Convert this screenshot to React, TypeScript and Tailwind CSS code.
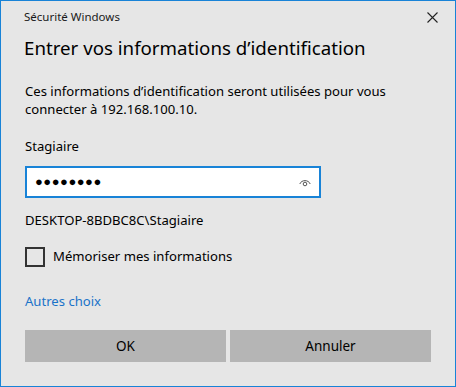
const EyeIcon = () => (
  <svg width="12" height="9" viewBox="0 0 12 9" fill="none" stroke="#555" strokeWidth="1">
    <path d="M0.8 6 C2.5 1.5 9.5 1.5 11.2 6" />
    <circle cx="6" cy="6" r="1.8" />
  </svg>
);

const CloseIcon = () => (
  <svg width="11" height="11" viewBox="0 0 11 11" stroke="#222" strokeWidth="1.1">
    <path d="M0.5 0.5 L10.5 10.5 M10.5 0.5 L0.5 10.5" />
  </svg>
);

export default function App() {
  return (
    <div
      className="w-[456px] h-[387px] bg-[#e6e6e6] border border-[#1883d7] flex flex-col text-[#1a1a1a]"
      style={{ fontFamily: '"Noto Sans", "Open Sans", sans-serif' }}
    >
      <div className="h-[32px] flex items-center justify-between pl-[23px] pr-[17px]">
        <span className="text-[11.5px] text-[#1a1a1a]">Sécurité Windows</span>
        <CloseIcon />
      </div>

      <div className="h-[30px] flex items-center pl-[23px]">
        <h1 className="text-[18.7px] text-black">Entrer vos informations d’identification</h1>
      </div>

      <p className="mt-[19px] px-[24px] text-[13.1px] leading-[18px] text-black">
        Ces informations d’identification seront utilisées pour vous
        <br />
        connecter à 192.168.100.10.
      </p>

      <div className="mt-[19px] h-[20px] flex items-center pl-[24px] text-[13.1px] text-black">
        Stagiaire
      </div>

      <div className="mt-[9px] ml-[24px] w-[296px] h-[32px] bg-white border-2 border-[#1883d7] flex items-center justify-between pl-[8px] pr-[8px]">
        <span className="text-[13px] tracking-[0.5px] text-black">●●●●●●●●</span>
        <EyeIcon />
      </div>

      <div className="mt-[13px] h-[20px] flex items-center pl-[24px] text-[13.1px] text-black">
        DESKTOP-8BDBC8C\Stagiaire
      </div>

      <label className="mt-[16px] ml-[24px] h-[20px] flex items-center gap-[8px]">
        <span className="w-[20px] h-[20px] border-2 border-[#333] bg-transparent" />
        <span className="text-[13.1px] text-black">Mémoriser mes informations</span>
      </label>

      <div className="mt-[25px] h-[20px] flex items-center pl-[24px] text-[13.1px] text-[#1a73c9]">
        Autres choix
      </div>

      <div className="mt-[18px] mx-[24px] flex gap-[4px]">
        <button className="flex-1 h-[32px] bg-[#b5b5b5] text-[13.5px] text-black">OK</button>
        <button className="flex-1 h-[32px] bg-[#b5b5b5] text-[13.5px] text-black">Annuler</button>
      </div>
    </div>
  );
}
